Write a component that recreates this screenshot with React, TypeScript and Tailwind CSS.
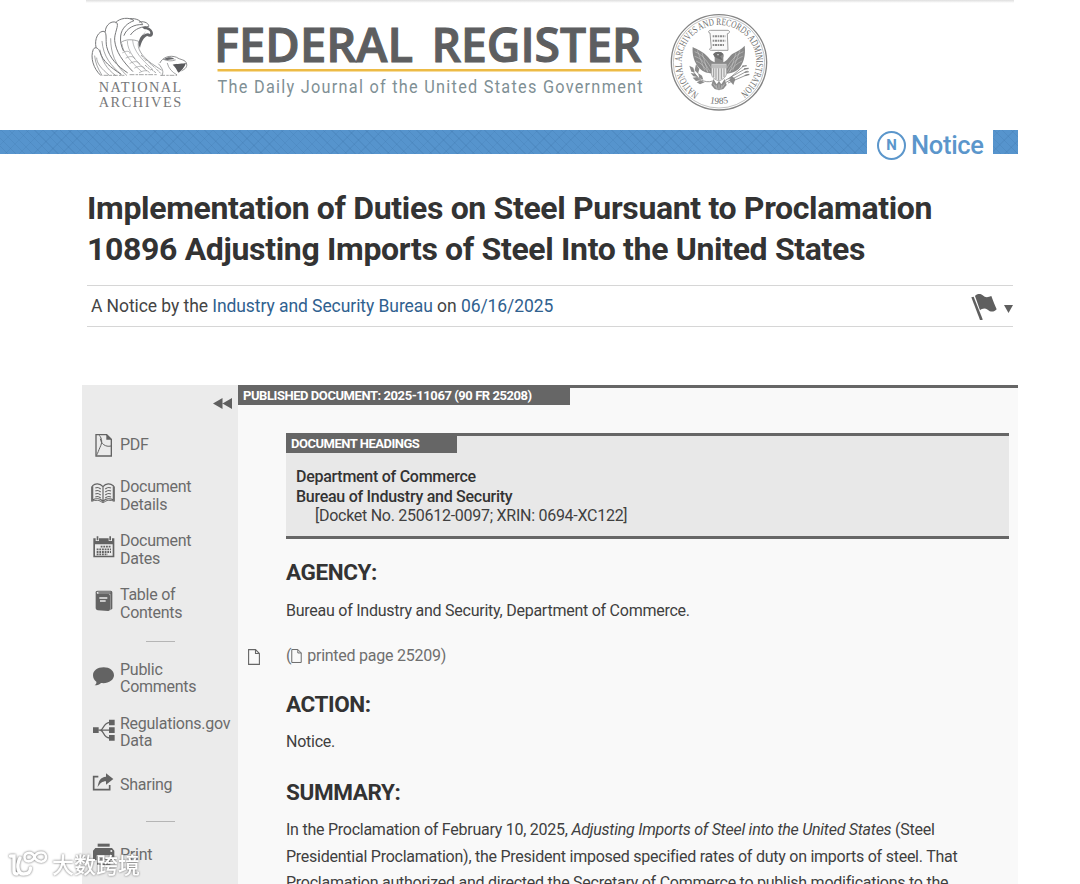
import type { ReactNode } from 'react';

function NationalArchivesLogo() {
  return (
    <svg viewBox="0 0 360 360" className="h-[120px] w-[120px] shrink-0">
      <g fill="none" stroke="#77787a" strokeWidth="3" strokeLinecap="round">
        <path d="M62 226C40 206 30 172 40 148C46 138 56 145 60 156C68 184 92 202 122 222" />
        <path d="M48 142C42 116 56 92 72 94C82 98 76 120 80 140C88 174 112 198 142 218" />
        <path d="M76 94C76 74 96 60 110 68C118 76 102 100 104 122C108 156 128 184 158 214" />
        <path d="M108 67C118 54 148 50 162 62C144 68 124 84 122 108C120 124 124 140 130 152" />
        <path d="M150 56C172 54 184 64 188 74C164 72 140 84 132 106" />
        <path d="M178 66C196 62 208 72 206 80C188 78 164 86 152 104" />
        <path d="M66 226C54 206 46 190 44 168M88 226C64 206 50 190 50 174M106 226C80 206 66 184 60 150M126 226C92 196 70 170 66 124M140 226C106 196 92 160 92 116" strokeWidth="2" />
        <path d="M122 128C136 116 160 118 176 124C170 144 184 168 214 190L244 210" strokeWidth="2" />
        <path d="M126 132C128 156 150 184 184 214M142 124C142 152 166 184 200 212M158 122C160 152 186 180 218 208" strokeWidth="1.500" />
        <path d="M128 158C142 150 150 154 150 160M138 174C152 166 164 170 164 176M150 190C166 180 178 186 178 192M164 204C180 194 194 200 194 206M178 218C194 208 208 212 208 218" strokeWidth="1.500" />
        <path d="M184 166l14 16M198 178l14 14M210 190l16 14M196 196l16 14M214 208l16 12M230 208l14 14" strokeWidth="2" strokeDasharray="6 4" />
        <path d="M240 188C248 172 270 164 290 172C300 180 318 178 320 192C322 204 312 208 306 212" strokeWidth="2.500" />
        <path d="M236 192C248 206 252 216 246 226M262 190C266 206 276 216 290 224M250 178C264 184 276 184 286 180" strokeWidth="2" />
        <path d="M72 226H132M150 224H232M242 226H290" strokeWidth="2" strokeDasharray="12 6 5 5" />
      </g>
      <path d="M186 82C202 76 220 88 219 102C218 112 206 112 202 108C192 112 184 124 180 144C172 130 178 112 188 104C198 98 200 92 186 82Z" fill="#66676a" />
      <path d="M190 88C204 86 214 94 210 102C204 98 198 100 188 106C198 98 198 94 190 88Z" fill="#fff" />
      <path d="M278 194C290 190 310 192 318 188C314 202 304 212 296 218C290 212 290 204 278 194Z" fill="#58595c" />
      <path d="M252 178C266 168 278 172 284 178C272 178 262 182 252 178Z" fill="#66676a" />
      <g fill="#77787a" fontFamily="Liberation Serif, serif" fontSize="43">
        <text x="56" y="277" textLength="248">NATIONAL</text>
        <text x="56" y="320" textLength="248">ARCHIVES</text>
      </g>
    </svg>
  );
}

function Wordmark() {
  return (
    <svg viewBox="0 0 460 100" className="mt-2.5 h-[100px] w-[460px] shrink-0">
      <g fill="#5d5e60" stroke="#5d5e60" strokeWidth="1.1" fontFamily="Open Sans, sans-serif" fontWeight="600" fontSize="47">
        <text x="14" y="52" textLength="199" lengthAdjust="spacingAndGlyphs">FEDERAL</text>
        <text x="231.500" y="52" textLength="210" lengthAdjust="spacingAndGlyphs">REGISTER</text>
      </g>
      <rect x="17.5" y="59" width="423.5" height="2.5" fill="#edbb45" />
      <text x="20" y="83" textLength="483" transform="scale(0.88 1)" fill="#7f9095" fontFamily="Roboto, sans-serif" fontSize="18.5">
        The Daily Journal of the United States Government
      </text>
    </svg>
  );
}

function ArchivesSeal() {
  return (
    <svg viewBox="0 0 360 345" className="mt-[5px] h-[115px] w-[120px] shrink-0">
      <defs>
        <path id="seal-top" d="M116.900 266.200A112 112 0 1 1 237.100 266.200" />
        <path id="seal-bottom" d="M110 278A130 130 0 0 0 244 278" />
      </defs>
      <g fill="none" stroke="#858585">
        <circle cx="177" cy="172" r="143" strokeWidth="4" />
        <circle cx="177" cy="172" r="137" strokeWidth="1.500" />
      </g>
      <g fill="#6e6e6e" fontFamily="Liberation Serif, serif" fontSize="28">
        <text>
          <textPath href="#seal-top" fontSize="30" textLength="572" lengthAdjust="spacingAndGlyphs">
            NATIONAL ARCHIVES AND RECORDS ADMINISTRATION
          </textPath>
        </text>
        <text textAnchor="middle">
          <textPath href="#seal-bottom" startOffset="50%">1985</textPath>
        </text>
      </g>
      <path d="M150 84C144 84 144 76 152 76H204C212 78 208 86 202 86L204 136H154C146 136 148 128 154 130Z" fill="#fafafa" stroke="#8b8b8b" strokeWidth="2.500" />
      <path d="M158 94h38M158 107h38M158 120h36" stroke="#8d8d8d" strokeWidth="6" strokeDasharray="4 2 7 2" />
      <path d="M98 126C112 134 128 138 144 156C150 164 154 168 164 172L164 154C160 148 166 140 176 142C188 140 194 148 190 158L190 172C204 166 206 154 218 146C232 138 244 134 254 122C258 152 250 176 236 192C222 204 212 204 200 206L156 206C142 204 130 202 118 190C102 172 96 148 98 126Z" fill="#898989" />
      <g fill="none" stroke="#d2d2d2" strokeWidth="1.500">
        <path d="M104 140C124 148 136 160 154 190M104 154C124 160 136 174 150 200M108 168C124 174 134 186 144 202M250 140C232 148 216 160 200 190M248 154C232 160 216 174 202 200M246 168C232 174 220 186 206 202M112 136l22 60M126 144l18 58M240 136l-22 60M228 144l-18 58" />
      </g>
      <path d="M159 148C166 138 184 138 190 148L180 154L188 166L172 160L164 156Z" fill="#6d6d6d" />
      <circle cx="174" cy="149" r="2" fill="#fff" />
      <g fill="#8c8c8c">
        <path d="M88 182L100 188L104 202L94 200ZM108 178L118 192L114 206L104 196ZM92 204L106 206L114 216L100 214ZM98 218L112 216L122 226L108 228ZM114 204L126 212L130 224L118 220ZM110 232L122 226L134 232L120 238Z" />
        <path d="M160 222L170 238L177 228L184 238L194 222L200 240L190 252L177 256L164 252L154 240Z" />
        <path d="M214 212L226 222L220 240L208 226Z" />
      </g>
      <path d="M154 176H200V206C196 220 186 224 177 228C166 224 156 220 154 206Z" fill="#e7e7e7" stroke="#8c8c8c" strokeWidth="2" />
      <path d="M155 178H199V190H155Z" fill="#bdbdbd" />
      <path d="M161 190V216M168 190V222M176 190V226M184 190V222M192 190V216" stroke="#999" strokeWidth="3" />
      <path d="M96 192C110 222 134 236 158 228M196 226L258 190M198 232L262 198M204 234L264 208M206 222L252 182" fill="none" stroke="#858585" strokeWidth="2.500" />
      <path d="M246 184l14-2M252 192l14-2M254 202l12-2M254 212l14-4" stroke="#858585" strokeWidth="4" />
      <path d="M160 236l8 12M168 240l4 14M177 238v16M186 240l-4 14M194 236l-8 12" stroke="#ddd" strokeWidth="1.500" />
    </svg>
  );
}

function FlagIcon() {
  return (
    <svg viewBox="0 0 78 80" className="h-[26.67px] w-[26px]" fill="#5f5f5f">
      <path d="M1 10L8 8L35 76Q33 81 27 78Z" />
      <path d="M12 6C19-2 29-1 35 4C43 12 52 10 61 6C66 20 72 34 77 46C68 56 58 54 50 47C42 41 33 43 27 49Z" />
    </svg>
  );
}

function Icon({ children }: { children: ReactNode }) {
  return (
    <svg viewBox="0 0 75 75" className="size-[25px] shrink-0 overflow-visible" fill="#636363">
      {children}
    </svg>
  );
}

const icons = {
  pdf: (
    <Icon>
      <path d="M15 5H47L61 19V69H15Z" fill="none" stroke="#636363" strokeWidth="4" />
      <path d="M46 4V20H62Z" />
      <path d="M25 7C34 18 34 29 27 43C23 52 20 61 17 66M28 17C30 32 43 43 60 39" fill="none" stroke="#636363" strokeWidth="3" />
    </Icon>
  ),
  book: (
    <Icon>
      <path d="M36 11C26 0 12 1 5 8V51C15 45 28 46 36 55C44 46 58 45 67 51V8C58 1 45 0 36 11ZM36 11V54" fill="none" stroke="#636363" strokeWidth="3.500" />
      <path d="M2 10V55C13 50 27 51 33 58H39C45 51 59 50 70 55V10" fill="none" stroke="#636363" strokeWidth="3" />
      <path d="M13 15Q21 11 29 18M13 24Q21 20 29 27M13 33Q21 29 29 36M13 42Q21 38 29 45M43 18Q51 11 60 15M43 27Q51 20 60 24M43 36Q51 29 60 33M43 45Q51 38 60 42" fill="none" stroke="#636363" strokeWidth="3.500" />
    </Icon>
  ),
  calendar: (
    <Icon>
      <path d="M7 4H14V12H24V4H53V12H63V4H70V61H7ZM12 22V56H65V22Z" fillRule="evenodd" />
      <path d="M17-2h5v12h-5zM55-2h5v12h-5z" />
      <path d="M29 29H60M17 37H60M17 45H60M17 52H50" stroke="#636363" strokeWidth="5.500" strokeDasharray="5.500 2.500" />
    </Icon>
  ),
  contents: (
    <Icon>
      <path d="M14 7Q12 0 20-1H59Q64-1 64 4V53L58 58V8H22V4H59V2H21Q17 2 17 5Q18 9 22 9H53Q57 9 57 14V55Q57 60 52 60L20 58Q14 57 14 52Z" />
      <path d="M25 21H49M27 30H44" stroke="#ebebeb" strokeWidth="4" />
    </Icon>
  ),
  comment: (
    <Icon>
      <path d="M38 4C19 4 6 14 6 28C6 37 10 43 16 47C17 51 15 55 11 58C20 58 26 55 30 51C51 54 69 43 69 28C69 14 56 4 38 4Z" />
    </Icon>
  ),
  data: (
    <Icon>
      <path d="M6 22h17v17H6zM54-1h17v17H54zM54 22h17v17H54zM54 45h17v17H54z" />
      <path d="M22 30.500H56M28 30.500C41 27 35 9 56 7M28 30.500C41 34 35 52 56 54" fill="none" stroke="#636363" strokeWidth="4" />
    </Icon>
  ),
  share: (
    <Icon>
      <path d="M22 11H8V50H56V36" fill="none" stroke="#636363" strokeWidth="5" />
      <path d="M20 43C22 24 29 12 45 11V1L67 18L45 35V25C33 25 27 31 20 43Z" />
    </Icon>
  ),
  print: (
    <Icon>
      <path d="M20 5H56V14H20Z" />
      <path d="M13 18H63L70 26V54H59V40H17V54H6V26Z" />
      <path d="M20 43V67H56V43M27 51H49M27 59H49" fill="none" stroke="#636363" strokeWidth="4" />
      <circle cx="61" cy="27" r="3" fill="#ebebeb" />
    </Icon>
  ),
};

function NavItem({ icon, className, children }: { icon: ReactNode; className: string; children: ReactNode }) {
  return (
    <li className={`flex items-center gap-1 pl-[9px] ${className}`}>
      {icon}
      <span className="leading-[17.5px]">{children}</span>
    </li>
  );
}

function Divider() {
  return (
    <li className="flex h-5 items-center justify-center">
      <span className="h-px w-[29px] bg-[#b5b5b5]" />
    </li>
  );
}

function Sidebar() {
  return (
    <nav className="w-[156px] shrink-0 bg-[#ebebeb] text-base tracking-[-0.26px] text-[#6b6b6b]">
      <div className="flex h-[35px] items-start justify-end pt-[13px] pr-[6px]">
        <svg viewBox="0 0 19 11" className="h-[11px] w-[19px]" fill="#5f5f5f">
          <path d="M0 5.500L9.500 0V11ZM9.500 5.500L19 0V11Z" />
        </svg>
      </div>
      <ul>
        <NavItem icon={icons.pdf} className="h-[49px] pt-px">PDF</NavItem>
        <NavItem icon={icons.book} className="h-[54px] pb-px">Document<br />Details</NavItem>
        <NavItem icon={icons.calendar} className="h-[54px] pb-px">Document<br />Dates</NavItem>
        <NavItem icon={icons.contents} className="h-[54px] pb-px">Table of<br />Contents</NavItem>
        <Divider />
        <NavItem icon={icons.comment} className="h-[54px]">Public<br />Comments</NavItem>
        <NavItem icon={icons.data} className="h-[54px]">Regulations.gov<br />Data</NavItem>
        <NavItem icon={icons.share} className="h-[52px]">Sharing</NavItem>
        <Divider />
        <NavItem icon={icons.print} className="h-[46px] pt-px">Print</NavItem>
      </ul>
    </nav>
  );
}

function PageIcon({ className }: { className: string }) {
  return (
    <svg viewBox="0 0 12 16" className={className} fill="none" stroke="#666" strokeWidth="1.100">
      <path d="M.6.6H7.500L11.400 4.500V15.400H.6ZM7.500.6V4.500H11.400" />
    </svg>
  );
}

function SectionHeading({ children }: { children: ReactNode }) {
  return <h2 className="text-[22.5px] leading-[30px] font-bold tracking-[-0.4px] text-[#333]">{children}</h2>;
}

function Document() {
  return (
    <article className="w-[780px] shrink-0 border-t-3 border-[#666] bg-[#f9f9f9] tracking-[-0.25px] text-[#3f3f3f]">
      <div className="h-[17px] w-[332px] bg-[#666] pl-[5px] text-[13px] leading-[15px] font-bold tracking-[-0.44px] text-white">
        PUBLISHED DOCUMENT: 2025-11067 (90 FR 25208)
      </div>
      <div className="pl-12">
        <section className="mt-7 h-[106px] w-[723px] border-y-3 border-[#666] bg-[#e8e8e8]">
          <div className="h-[17px] w-[171px] bg-[#666] pl-[5px] text-[13px] leading-[15px] font-bold tracking-[-0.49px] text-white">
            DOCUMENT HEADINGS
          </div>
          <div className="pt-[14px] pl-2.5 text-base leading-5 tracking-[-0.27px]">
            <p className="font-medium text-[#333]">Department of Commerce</p>
            <p className="font-medium text-[#333]">Bureau of Industry and Security</p>
            <p className="-mt-px pl-[19px]">[Docket No. 250612-0097; XRIN: 0694-XC122]</p>
          </div>
        </section>
        <div className="pt-[18px] text-base leading-[26.500px]">
          <SectionHeading>AGENCY:</SectionHeading>
          <p className="mt-[11px]">Bureau of Industry and Security, Department of Commerce.</p>
          <div className="mt-[18px] -ml-[38px] flex h-[27px] items-center pt-[1px] text-[#6f6f6f]">
            <PageIcon className="mr-[26px] h-4 w-3" />
            <span>(</span>
            <PageIcon className="mr-[5px] mb-px h-[14px] w-[11px]" />
            <span>printed page 25209)</span>
          </div>
          <div className="mt-[19px]">
            <SectionHeading>ACTION:</SectionHeading>
          </div>
          <p className="mt-[10px]">Notice.</p>
          <div className="mt-[22px]">
            <SectionHeading>SUMMARY:</SectionHeading>
          </div>
          <p className="mt-[10px] whitespace-nowrap">
            In the Proclamation of February 10, 2025, <em>Adjusting Imports of Steel into the United States</em> (Steel
            <br />
            Presidential Proclamation), the President imposed specified rates of duty on imports of steel. That
            <br />
            Proclamation authorized and directed the Secretary of Commerce to publish modifications to the
          </p>
        </div>
      </div>
    </article>
  );
}

function Watermark() {
  return (
    <div className="absolute top-[847px] left-2 flex items-center gap-1 text-white drop-shadow-[0_0_1px_#666]">
      <svg viewBox="0 0 40 30" className="h-[30px] w-10" fill="none" stroke="#fff" strokeWidth="3.400" strokeLinecap="round">
        <path d="M2.500 8H6V23Q6 26 9 26M12 10C8 18 10 26 15.500 26C20 26 22.500 24 22.500 20" />
        <path d="M26.500 9C24 3 16 4 16.500 9.500C17 15 24 14.500 26.500 9C29 3 38 3 38 9C38 15.500 29 15 26.500 9Z" strokeWidth="2.600" />
      </svg>
      <span className="font-['Noto_Sans_CJK_SC',sans-serif] text-[22px] leading-[32px] font-medium">大数跨境</span>
    </div>
  );
}

const stripe =
  'h-6 bg-[#5694cd] bg-[repeating-linear-gradient(45deg,transparent_0_5px,rgba(40,90,140,0.13)_5px_6px),repeating-linear-gradient(-45deg,transparent_0_9px,rgba(40,90,140,0.1)_9px_10px)]';

export default function App() {
  return (
    <div className="relative h-[884px] w-[1080px] overflow-hidden bg-white font-[Roboto,sans-serif]">
      <header className="h-[130px] pl-20">
        <div className="flex">
          <NationalArchivesLogo />
          <Wordmark />
          <ArchivesSeal />
        </div>
      </header>
      <div className="flex w-[1018px]">
        <div className={`w-[867px] ${stripe}`} />
        <div className="flex h-[30px] w-[126px] items-center pl-[10px] text-[#5b96cb]">
          <span className="flex size-[29px] items-center justify-center rounded-full border-2 border-[#5b96cb] text-[15px] font-bold">N</span>
          <span className="pl-[5px] text-[25.500px] leading-[29px] font-medium tracking-[-0.3px]">Notice</span>
        </div>
        <div className={`w-[25px] ${stripe}`} />
      </div>
      <div className="ml-[87px] w-[926px] pt-[28px]">
        <h1 className="h-[97px] text-[32px] leading-[40.500px] font-bold tracking-[-0.34px] whitespace-nowrap text-[#333]">
          Implementation of Duties on Steel Pursuant to Proclamation
          <br />
          10896 Adjusting Imports of Steel Into the United States
        </h1>
        <div className="flex h-[42px] items-center justify-between border-y border-[#d6d6d6] pl-[4px] text-[17.500px] tracking-[-0.07px] text-[#444]">
          <p>
            A Notice by the <a className="text-[#30618f]">Industry and Security Bureau</a> on{' '}
            <a className="text-[#30618f]">06/16/2025</a>
          </p>
          <div className="flex items-center gap-[7px] pt-[2px]">
            <FlagIcon />
            <svg viewBox="0 0 9 8" className="mt-1 h-2 w-[9px]" fill="#5f5f5f">
              <path d="M0 0H9L4.500 8Z" />
            </svg>
          </div>
        </div>
      </div>
      <main className="mt-[58px] ml-[82px] flex h-[520px]">
        <Sidebar />
        <Document />
      </main>
      <div className="absolute top-0 left-[86px] h-[3px] w-[928px] bg-gradient-to-b from-[#dedede] to-white" />
      <Watermark />
    </div>
  );
}
